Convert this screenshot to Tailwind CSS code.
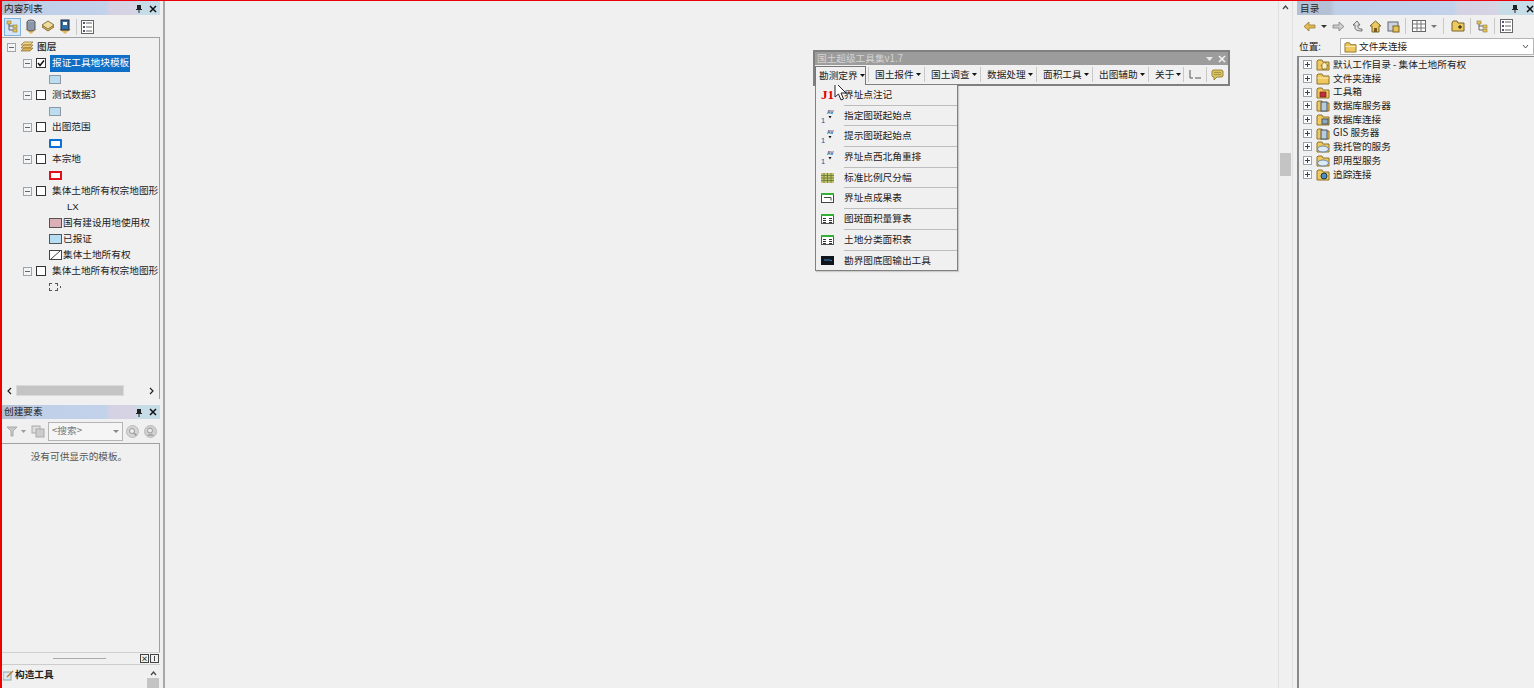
<!DOCTYPE html>
<html lang="zh-CN">
<head>
  <meta charset="UTF-8" />
  <title>ArcMap 国土超级工具集</title>
  <script src="https://cdn.jsdelivr.net/npm/@tailwindcss/browser@4"></script>
</head>
<body class="bg-[#f0f0f0] text-[#222] text-[9.67px] leading-none overflow-hidden font-['Noto_Sans_CJK_SC','Liberation_Sans',sans-serif]">
  <!-- icon sprites -->
  <svg class="hidden">
    <symbol id="minus" viewBox="0 0 9 9"><rect x=".5" y=".5" width="8" height="8" fill="#f4f4f4" stroke="#9aa5ad"/><path d="M2 4.5h5" stroke="#5a6a78"/></symbol>
    <symbol id="plus" viewBox="0 0 9 9"><rect x=".5" y=".5" width="8" height="8" fill="#fff" stroke="#9aa5ad"/><path d="M2 4.5h5M4.5 2v5" stroke="#33475b"/></symbol>
    <symbol id="folder" viewBox="0 0 14 13"><path d="M1 3V12H13V4H7L6 2H2Z" fill="#efc95f" stroke="#8f7228"/><path d="M1.5 6H12.5" stroke="#fbeeb8"/></symbol>
    <symbol id="avicon" viewBox="0 0 14 14"><text x="0" y="13.5" font-size="7.5" fill="#1f4f8f" font-family="Liberation Sans">1</text><text x="6" y="5" font-size="5" font-weight="700" fill="#1f4f8f" font-family="Liberation Sans">AV</text><path d="M7.5 7l1.500 2.500L10.500 7Z" fill="#111"/></symbol>
    <symbol id="tbl" viewBox="0 0 13 10"><rect x=".5" y=".5" width="12" height="9" fill="#fff" stroke="#555"/><path d="M0 1h13" stroke="#35b035" stroke-width="2"/><path d="M2 4.5h3M8 4.5h3M2 6.5h3M8 6.5h3M2 8.5h3M8 8.5h3" stroke="#333"/></symbol>
  </svg>

  <div class="flex h-[688px] w-[1534px] border-t border-l-[2px] border-t-[#e8000b] border-l-[#f00000]">
    <!-- left column -->
    <div class="w-[158px] shrink-0 flex flex-col">
      <div class="h-[14px] pt-px flex items-center pl-[2px] bg-[linear-gradient(90deg,#b4c0d4_0%,#b4c0d4_14%,#c0cfe8_16%,#c2d2ea_66%,#d4d2e2_68%,#d6d4e4_84%,#c6dce6_86%,#c6dce6_100%)]">
        <span class="flex-1">内容列表</span>
        <svg class="w-[8px] h-[9px] mr-[6px]" viewBox="0 0 8 9"><path d="M2 1h4v4h1v1H4.500v3h-1V6H1V5h1Z" fill="#222"/></svg>
        <svg class="w-[8px] h-[8px] mr-[3px]" viewBox="0 0 8 8"><path d="M1 1l6 6M7 1L1 7" stroke="#111" stroke-width="1.500"/></svg>
      </div>
      <div class="h-[22px] pt-px flex items-center gap-[3px] pl-[2px]">
        <span class="w-[17px] h-[18px] border border-[#7fb2dc] bg-[#d5e7f6] flex items-center justify-center">
          <svg class="w-[13px] h-[13px]" viewBox="0 0 13 13"><path d="M3 3v7h5M3 6h5" stroke="#666" fill="none"/><rect x="1" y="1" width="4" height="3" fill="#e8c45a" stroke="#7a6a2a" stroke-width=".5"/><rect x="7" y="5" width="4" height="3" fill="#e8c45a" stroke="#7a6a2a" stroke-width=".5"/><rect x="7" y="9" width="4" height="3" fill="#e8c45a" stroke="#7a6a2a" stroke-width=".5"/></svg>
        </span>
        <svg class="w-[14px] h-[16px]" viewBox="0 0 14 16"><path d="M1 10l6 5 6-5Z" fill="#e0b860"/><ellipse cx="7" cy="3" rx="4" ry="2" fill="#aab4c0" stroke="#556"/><path d="M3 3v7c0 2.500 8 2.500 8 0V3" fill="#8c98a8" stroke="#556"/></svg>
        <svg class="w-[14px] h-[16px]" viewBox="0 0 14 16"><path d="M7 4l6 4-6 4-6-4Z" fill="#d9b968" stroke="#8a7435"/><path d="M7 2l6 4-6 4-6-4Z" fill="#efdca0" stroke="#8a7435"/></svg>
        <svg class="w-[14px] h-[16px]" viewBox="0 0 14 16"><path d="M1 10l6 5 6-5Z" fill="#e0b860"/><rect x="3" y="1" width="8" height="10" fill="#2f6fa8" stroke="#223"/><rect x="5" y="3" width="4" height="3" fill="#fff"/></svg>
        <span class="w-px h-[16px] bg-[#c8c8c8] mx-[1px]"></span>
        <svg class="w-[13px] h-[14px]" viewBox="0 0 13 14"><rect x=".5" y=".5" width="12" height="13" fill="#fff" stroke="#666"/><path d="M5 3h6M5 7h6M5 11h6" stroke="#666"/><path d="M2 2h2v2H2zM2 6h2v2H2zM2 10h2v2H2z" fill="#557"/></svg>
      </div>

      <!-- layer tree -->
      <div class="h-[362px] shrink-0 border-t border-r border-[#a0a0a0] flex flex-col">
        <div class="flex-1 pl-[5px] pt-px">
          <div class="h-[16px] flex items-center font-medium">
            <svg class="w-[9px] h-[9px] shrink-0"><use href="#minus"/></svg>
            <svg class="w-[14px] h-[12px] ml-[4px] mr-[3px]" viewBox="0 0 14 12"><path d="M4 1h9l-3 3H1Z" fill="#f0d68a" stroke="#8a7030" stroke-width=".7"/><path d="M4 4h9l-3 3H1Z" fill="#e9c56c" stroke="#8a7030" stroke-width=".7"/><path d="M4 7h9l-3 3H1Z" fill="#ddb055" stroke="#8a7030" stroke-width=".7"/></svg>
            <span>图层</span>
          </div>
          <div class="pl-[16px]">
            <div class="h-[16px] flex items-center">
              <svg class="w-[9px] h-[9px] shrink-0"><use href="#minus"/></svg>
              <span class="w-[10px] h-[10px] shrink-0 ml-[4px] border border-[#333] bg-white flex items-center justify-center">
                <svg class="w-[8px] h-[8px]" viewBox="0 0 8 8"><path d="M1 4l2 2.500L7 1.500" stroke="#111" stroke-width="1.500" fill="none"/></svg>
              </span>
              <span class="ml-[4px] h-[17px] w-[80px] shrink-0 whitespace-nowrap bg-[#0f6fc6] text-white flex items-center pl-[2px]">报证工具地块模板</span>
            </div>
            <div class="h-[16px] flex items-center pl-[26px]"><span class="w-[12px] h-[9px] border border-[#8a9aa5] bg-[#bcdcf0]"></span></div>
            <div class="h-[16px] flex items-center">
              <svg class="w-[9px] h-[9px] shrink-0"><use href="#minus"/></svg>
              <span class="w-[10px] h-[10px] shrink-0 ml-[4px] border border-[#333] bg-white"></span>
              <span class="ml-[6px]">测试数据3</span>
            </div>
            <div class="h-[16px] flex items-center pl-[26px]"><span class="w-[12px] h-[9px] border border-[#8a9aa5] bg-[#bcdcf0]"></span></div>
            <div class="h-[16px] flex items-center">
              <svg class="w-[9px] h-[9px] shrink-0"><use href="#minus"/></svg>
              <span class="w-[10px] h-[10px] shrink-0 ml-[4px] border border-[#333] bg-white"></span>
              <span class="ml-[6px]">出图范围</span>
            </div>
            <div class="h-[16px] flex items-center pl-[26px]"><span class="w-[13px] h-[9px] border-[2px] border-[#0a6fd8] bg-white rounded-[1px]"></span></div>
            <div class="h-[16px] flex items-center">
              <svg class="w-[9px] h-[9px] shrink-0"><use href="#minus"/></svg>
              <span class="w-[10px] h-[10px] shrink-0 ml-[4px] border border-[#333] bg-white"></span>
              <span class="ml-[6px]">本宗地</span>
            </div>
            <div class="h-[16px] flex items-center pl-[26px]"><span class="w-[13px] h-[9px] border-[2px] border-[#e3101c] bg-white"></span></div>
            <div class="h-[16px] flex items-center whitespace-nowrap">
              <svg class="w-[9px] h-[9px] shrink-0"><use href="#minus"/></svg>
              <span class="w-[10px] h-[10px] shrink-0 ml-[4px] border border-[#333] bg-white"></span>
              <span class="ml-[6px]">集体土地所有权宗地图形</span>
            </div>
            <div class="h-[16px] flex items-center pl-[44px] font-['Liberation_Sans']">LX</div>
            <div class="h-[16px] flex items-center pl-[26px]"><span class="w-[13px] h-[10px] border border-[#555] bg-[#dcb0b6] mr-[1px]"></span>国有建设用地使用权</div>
            <div class="h-[16px] flex items-center pl-[26px]"><span class="w-[13px] h-[10px] border border-[#555] bg-[#b5def5] mr-[1px]"></span>已报证</div>
            <div class="h-[16px] flex items-center pl-[26px]">
              <svg class="w-[13px] h-[10px] mr-[1px]" viewBox="0 0 13 10"><rect x=".5" y=".5" width="12" height="9" fill="#fff" stroke="#444"/><path d="M2 9l9-8" stroke="#444"/></svg>集体土地所有权
            </div>
            <div class="h-[16px] flex items-center whitespace-nowrap">
              <svg class="w-[9px] h-[9px] shrink-0"><use href="#minus"/></svg>
              <span class="w-[10px] h-[10px] shrink-0 ml-[4px] border border-[#333] bg-white"></span>
              <span class="ml-[6px]">集体土地所有权宗地图形</span>
            </div>
            <div class="h-[16px] flex items-center pl-[26px]"><span class="w-[9px] h-[8px] border border-dashed border-[#555]"></span><span class="w-px h-[2px] bg-[#555] ml-[2px]"></span></div>
          </div>
        </div>
        <div class="h-[15px] flex items-center pl-[5px] pr-[5px] mb-px">
          <svg class="w-[5px] h-[8px] shrink-0" viewBox="0 0 5 8"><path d="M4 1L1 4l3 3" stroke="#222" stroke-width="1.200" fill="none"/></svg>
          <span class="w-[108px] h-[11px] shrink-0 ml-[4px] bg-[#c4c4c4] border border-[#dadada]"></span>
          <svg class="w-[5px] h-[8px] shrink-0 ml-auto" viewBox="0 0 5 8"><path d="M1 1l3 3-3 3" stroke="#222" stroke-width="1.200" fill="none"/></svg>
        </div>
      </div>

      <!-- create features panel -->
      <div class="mt-[6px] h-[14px] flex items-center pl-[2px] bg-[linear-gradient(90deg,#b4c0d4_0%,#b4c0d4_14%,#c0cfe8_16%,#c2d2ea_66%,#d4d2e2_68%,#d6d4e4_84%,#c6dce6_86%,#c6dce6_100%)]">
        <span class="flex-1">创建要素</span>
        <svg class="w-[8px] h-[9px] mr-[6px]" viewBox="0 0 8 9"><path d="M2 1h4v4h1v1H4.500v3h-1V6H1V5h1Z" fill="#222"/></svg>
        <svg class="w-[8px] h-[8px] mr-[3px]" viewBox="0 0 8 8"><path d="M1 1l6 6M7 1L1 7" stroke="#111" stroke-width="1.500"/></svg>
      </div>
      <div class="h-[24px] flex items-center pl-[4px]">
        <svg class="w-[13px] h-[13px]" viewBox="0 0 13 13"><path d="M1 2h10L7 6v5H5V6Z" fill="#c9c9c9" stroke="#aaa"/></svg>
        <svg class="w-[5px] h-[3px] ml-[2px]" viewBox="0 0 5 3"><path d="M0 0h5L2.500 3Z" fill="#999"/></svg>
        <svg class="w-[14px] h-[13px] ml-[5px]" viewBox="0 0 14 13"><rect x="1" y="1" width="8" height="7" fill="#ddd" stroke="#aaa"/><rect x="5" y="4" width="8" height="8" fill="#ccc" stroke="#aaa"/></svg>
        <div class="w-[75px] h-[19px] ml-[3px] border border-[#b5b5b5] bg-[#f5f5f5] text-[#777] flex items-center justify-between px-[3px]">
          &lt;搜索&gt;
          <svg class="w-[6px] h-[3px]" viewBox="0 0 6 3"><path d="M0 0h6L3 3Z" fill="#888"/></svg>
        </div>
        <svg class="w-[13px] h-[13px] ml-[3px]" viewBox="0 0 13 13"><circle cx="6.5" cy="6.5" r="6" fill="#d4d4d4" stroke="#bbb"/><circle cx="6" cy="6" r="2.5" fill="#eee" stroke="#999"/><path d="M8 8l2.500 2.500" stroke="#999" stroke-width="1.500"/></svg>
        <svg class="w-[13px] h-[13px] ml-[5px]" viewBox="0 0 13 13"><circle cx="6.5" cy="6.5" r="6" fill="#d0d0d0" stroke="#bbb"/><circle cx="6" cy="5.5" r="2.5" fill="#e8e8e8" stroke="#999"/><path d="M3 11c1-3 6-3 7 0" fill="#aaa"/></svg>
      </div>
      <div class="h-[209px] shrink-0 border-t border-r border-[#a0a0a0] text-center pt-[8px] text-[#555] pr-[3px]">没有可供显示的模板。</div>
      <div class="h-[12px] border-t border-[#d0d0d0] flex items-center relative">
        <span class="w-[53px] h-px bg-[#aaa] ml-[51px]"></span>
        <div class="absolute right-[1px] top-[1px] flex gap-px">
          <span class="w-[9px] h-[9px] border border-[#444] flex items-center justify-center text-[7px] font-bold">×</span>
          <span class="w-[9px] h-[9px] border border-[#444] flex items-center justify-center"><span class="w-px h-[5px] bg-[#444]"></span></span>
        </div>
      </div>
      <div class="h-[24px] border-t border-[#ccc] flex pt-[5px] pl-px relative">
        <svg class="w-[11px] h-[11px] mr-px" viewBox="0 0 11 11"><rect x="0" y="2" width="8" height="8" fill="#dfe6ee" stroke="#8aa"/><path d="M4 7l6-6" stroke="#c07a30" stroke-width="1.500"/></svg>
        <span class="font-bold">构造工具</span>
        <svg class="absolute right-[3px] top-[6px] w-[7px] h-[5px]" viewBox="0 0 7 5"><path d="M1 4l2.500-3L6 4" stroke="#444" fill="none" stroke-width="1.200"/></svg>
        <span class="absolute right-[1px] top-[13px] w-[12px] h-[10px] bg-[#c4c4c4]"></span>
      </div>
    </div>

    <!-- gap with splitter lines -->
    <div class="w-[5px] shrink-0 border-r-2 border-[#a8a8a8]"></div>

    <!-- map area -->
    <div class="w-[1113px] shrink-0"></div>

    <!-- vertical scrollbar -->
    <div class="w-[15px] shrink-0 border-x border-[#e0e0e0] flex flex-col items-center pt-[4px]">
      <svg class="w-[7px] h-[5px]" viewBox="0 0 7 5"><path d="M1 4l2.500-3L6 4" stroke="#444" fill="none" stroke-width="1.200"/></svg>
      <span class="w-[11px] h-[23px] mt-[143px] bg-[#c4c4c4]"></span>
    </div>
    <div class="w-[4px] shrink-0"></div>

    <!-- catalog panel -->
    <div class="flex-1 min-w-0 flex flex-col">
      <div class="h-[14px] pt-px flex items-center pl-[3px] bg-[linear-gradient(90deg,#b4c0d4_0%,#b4c0d4_14%,#c0cfe8_16%,#c2d2ea_66%,#d4d2e2_68%,#d6d4e4_84%,#c6dce6_86%,#c6dce6_100%)]">
        <span class="flex-1">目录</span>
        <svg class="w-[8px] h-[9px] mr-[7px]" viewBox="0 0 8 9"><path d="M2 1h4v4h1v1H4.500v3h-1V6H1V5h1Z" fill="#222"/></svg>
        <svg class="w-[8px] h-[8px]" viewBox="0 0 8 8"><path d="M1 1l6 6M7 1L1 7" stroke="#111" stroke-width="1.500"/></svg>
      </div>
      <div class="h-[22px] flex items-center pl-[6px]">
        <svg class="w-[13px] h-[11px]" viewBox="0 0 13 11"><path d="M1 5.5L6 1v3h6v3H6v3Z" fill="#e3bb4e" stroke="#8a7030" stroke-width=".7"/></svg>
        <svg class="w-[6px] h-[3px] ml-[5px]" viewBox="0 0 6 3"><path d="M0 0h6L3 3Z" fill="#333"/></svg>
        <svg class="w-[13px] h-[11px] ml-[5px]" viewBox="0 0 13 11"><path d="M12 5.5L7 1v3H1v3h6v3Z" fill="#ccc" stroke="#777" stroke-width=".7"/></svg>
        <svg class="w-[12px] h-[12px] ml-[6px]" viewBox="0 0 12 12"><path d="M6 1L2 5h2v3c0 2 3 3 7 3V9C8 9 7 8 7 7V5h2Z" fill="#e2e2e2" stroke="#555" stroke-width=".8"/></svg>
        <svg class="w-[13px] h-[13px] ml-[6px]" viewBox="0 0 13 13"><path d="M6.5 1L1 6h2v6h7V6h2Z" fill="#edca5e" stroke="#7a6228"/><rect x="5" y="8" width="3" height="4" fill="#7a5a20"/></svg>
        <svg class="w-[13px] h-[13px] ml-[5px]" viewBox="0 0 13 13"><rect x="1" y="2" width="10" height="9" fill="#c9d4de" stroke="#667"/><rect x="6" y="6" width="6" height="6" fill="#e8c252" stroke="#7a6228"/></svg>
        <span class="w-px h-[16px] bg-[#c8c8c8] ml-[5px]"></span>
        <svg class="w-[14px] h-[12px] ml-[6px]" viewBox="0 0 14 12"><rect x=".5" y=".5" width="13" height="11" fill="#fff" stroke="#666"/><path d="M0 4h14M0 8h14M5 0v12M9 0v12" stroke="#777"/></svg>
        <svg class="w-[6px] h-[3px] ml-[5px]" viewBox="0 0 6 3"><path d="M0 0h6L3 3Z" fill="#777"/></svg>
        <span class="w-px h-[16px] bg-[#c8c8c8] ml-[6px]"></span>
        <svg class="w-[14px] h-[12px] ml-[7px]" viewBox="0 0 14 12"><path d="M1 3V11H13V3H7L6 1H2Z" fill="#edca5e" stroke="#7a6228"/><path d="M7 7h4M9 5v4" stroke="#111"/></svg>
        <span class="w-px h-[16px] bg-[#c8c8c8] ml-[5px]"></span>
        <svg class="w-[13px] h-[13px] ml-[5px]" viewBox="0 0 13 13"><path d="M3 3v7h5M3 6h5" stroke="#666" fill="none"/><rect x="1" y="1" width="4" height="3" fill="#e8c45a" stroke="#7a6a2a" stroke-width=".5"/><rect x="7" y="5" width="4" height="3" fill="#e8c45a" stroke="#7a6a2a" stroke-width=".5"/><rect x="7" y="9" width="4" height="3" fill="#e8c45a" stroke="#7a6a2a" stroke-width=".5"/></svg>
        <span class="w-px h-[16px] bg-[#c8c8c8] ml-[5px]"></span>
        <svg class="w-[13px] h-[14px] ml-[5px]" viewBox="0 0 13 14"><rect x=".5" y=".5" width="12" height="13" fill="#fff" stroke="#666"/><path d="M5 3h6M5 7h6M5 11h6" stroke="#666"/><path d="M2 2h2v2H2zM2 6h2v2H2zM2 10h2v2H2z" fill="#557"/></svg>
      </div>
      <div class="h-[19px] flex items-center pl-[2px]">
        <span class="w-[41px] shrink-0">位置:</span>
        <div class="flex-1 h-[17px] border border-[#b5b5b5] bg-white flex items-center pl-[3px] pr-[4px]">
          <svg class="w-[13px] h-[12px] mr-[2px]"><use href="#folder"/></svg>
          <span class="flex-1">文件夹连接</span>
          <svg class="w-[7px] h-[5px]" viewBox="0 0 7 5"><path d="M1 1l2.500 3L6 1" stroke="#555" fill="none"/></svg>
        </div>
      </div>
      <div class="flex-1 border-t border-l-2 border-[#8a8a8a] pl-[4px] pt-px">
        <div class="h-[13.700px] flex items-center whitespace-nowrap"><svg class="w-[9px] h-[9px] mr-[4px]"><use href="#plus"/></svg><svg class="w-[14px] h-[13px] mr-[3px]" viewBox="0 0 14 13"><path d="M1 3V12H13V4H7L6 2H2Z" fill="#efc95f" stroke="#8f7228"/><path d="M8.500 4L5 7.500h1V11h5V7.500h1Z" fill="#fbeeb8" stroke="#6a5420" stroke-width=".7"/></svg>默认工作目录 - 集体土地所有权</div>
        <div class="h-[13.700px] flex items-center"><svg class="w-[9px] h-[9px] mr-[4px]"><use href="#plus"/></svg><svg class="w-[14px] h-[13px] mr-[3px]"><use href="#folder"/></svg>文件夹连接</div>
        <div class="h-[13.700px] flex items-center"><svg class="w-[9px] h-[9px] mr-[4px]"><use href="#plus"/></svg><svg class="w-[14px] h-[13px] mr-[3px]" viewBox="0 0 14 13"><path d="M1 3V12H13V4H7L6 2H2Z" fill="#efc95f" stroke="#8f7228"/><path d="M4 6h6v5H4Z" fill="#c0303a" stroke="#7a1a20" stroke-width=".7"/></svg>工具箱</div>
        <div class="h-[13.700px] flex items-center"><svg class="w-[9px] h-[9px] mr-[4px]"><use href="#plus"/></svg><svg class="w-[14px] h-[13px] mr-[3px]" viewBox="0 0 14 13"><path d="M1 3V12H13V4H7L6 2H2Z" fill="#efc95f" stroke="#8f7228"/><rect x="5" y="3" width="6" height="9" fill="#b8cbdc" stroke="#456"/></svg>数据库服务器</div>
        <div class="h-[13.700px] flex items-center"><svg class="w-[9px] h-[9px] mr-[4px]"><use href="#plus"/></svg><svg class="w-[14px] h-[13px] mr-[3px]" viewBox="0 0 14 13"><path d="M1 3V12H13V4H7L6 2H2Z" fill="#efc95f" stroke="#8f7228"/><rect x="6" y="6" width="6" height="5" fill="#8fa8c0" stroke="#456"/></svg>数据库连接</div>
        <div class="h-[13.700px] flex items-center"><svg class="w-[9px] h-[9px] mr-[4px]"><use href="#plus"/></svg><svg class="w-[14px] h-[13px] mr-[3px]" viewBox="0 0 14 13"><path d="M1 3V12H13V4H7L6 2H2Z" fill="#efc95f" stroke="#8f7228"/><rect x="5" y="3" width="6" height="9" fill="#b8cbdc" stroke="#456"/></svg>GIS 服务器</div>
        <div class="h-[13.700px] flex items-center"><svg class="w-[9px] h-[9px] mr-[4px]"><use href="#plus"/></svg><svg class="w-[14px] h-[13px] mr-[3px]" viewBox="0 0 14 13"><path d="M1 3V12H13V4H7L6 2H2Z" fill="#efc95f" stroke="#8f7228"/><ellipse cx="7" cy="9" rx="5.500" ry="3" fill="#dbeaf6" stroke="#6a8aa8"/></svg>我托管的服务</div>
        <div class="h-[13.700px] flex items-center"><svg class="w-[9px] h-[9px] mr-[4px]"><use href="#plus"/></svg><svg class="w-[14px] h-[13px] mr-[3px]" viewBox="0 0 14 13"><path d="M1 3V12H13V4H7L6 2H2Z" fill="#efc95f" stroke="#8f7228"/><ellipse cx="7" cy="9" rx="5.500" ry="3" fill="#dbeaf6" stroke="#6a8aa8"/></svg>即用型服务</div>
        <div class="h-[13.700px] flex items-center"><svg class="w-[9px] h-[9px] mr-[4px]"><use href="#plus"/></svg><svg class="w-[14px] h-[13px] mr-[3px]" viewBox="0 0 14 13"><path d="M1 3V12H13V4H7L6 2H2Z" fill="#efc95f" stroke="#8f7228"/><circle cx="8" cy="8" r="3" fill="#4a90c8" stroke="#234"/></svg>追踪连接</div>
      </div>
    </div>
  </div>

  <!-- floating toolbar -->
  <div class="absolute left-[813px] top-[50px] w-[417px] h-[36px] border-[2px] border-[#808080] bg-[#f0f0f0] whitespace-nowrap">
    <div class="h-[13px] bg-[#9c9c9c] text-[#d4d4d4] flex items-center pl-[2px] pr-[2px]">
      <span class="flex-1">国土超级工具集v1.7</span>
      <svg class="w-[7px] h-[4px] mr-[5px]" viewBox="0 0 7 4"><path d="M0 0h7L3.500 4Z" fill="#e8e8e8"/></svg>
      <svg class="w-[8px] h-[8px]" viewBox="0 0 8 8"><path d="M1 1l6 6M7 1L1 7" stroke="#f4f4f4" stroke-width="1.500"/></svg>
    </div>
    <div class="h-[19px] flex items-center">
      <div class="w-[51px] h-[19px] shrink-0 border border-b-0 border-[#777] flex items-center pl-[3px] bg-[#f0f0f0] z-10 mt-px">勘测定界<svg class="w-[5px] h-[3px] ml-[2px]" viewBox="0 0 5 3"><path d="M0 0h5L2.500 3Z" fill="#111"/></svg></div>
      <span class="w-px h-[15px] bg-[#c8c8c8] ml-[2px]"></span>
      <div class="w-[55px] flex items-center pl-[6px]">国土报件<svg class="w-[5px] h-[3px] ml-[2px]" viewBox="0 0 5 3"><path d="M0 0h5L2.500 3Z" fill="#111"/></svg></div>
      <span class="w-px h-[15px] bg-[#c8c8c8]"></span>
      <div class="w-[55px] flex items-center pl-[6px]">国土调查<svg class="w-[5px] h-[3px] ml-[2px]" viewBox="0 0 5 3"><path d="M0 0h5L2.500 3Z" fill="#111"/></svg></div>
      <span class="w-px h-[15px] bg-[#c8c8c8]"></span>
      <div class="w-[55px] flex items-center pl-[6px]">数据处理<svg class="w-[5px] h-[3px] ml-[2px]" viewBox="0 0 5 3"><path d="M0 0h5L2.500 3Z" fill="#111"/></svg></div>
      <span class="w-px h-[15px] bg-[#c8c8c8]"></span>
      <div class="w-[55px] flex items-center pl-[6px]">面积工具<svg class="w-[5px] h-[3px] ml-[2px]" viewBox="0 0 5 3"><path d="M0 0h5L2.500 3Z" fill="#111"/></svg></div>
      <span class="w-px h-[15px] bg-[#c8c8c8]"></span>
      <div class="w-[55px] flex items-center pl-[6px]">出图辅助<svg class="w-[5px] h-[3px] ml-[2px]" viewBox="0 0 5 3"><path d="M0 0h5L2.500 3Z" fill="#111"/></svg></div>
      <span class="w-px h-[15px] bg-[#c8c8c8]"></span>
      <div class="w-[34px] flex items-center pl-[6px]">关于<svg class="w-[5px] h-[3px] ml-[2px]" viewBox="0 0 5 3"><path d="M0 0h5L2.500 3Z" fill="#111"/></svg></div>
      <span class="w-px h-[15px] bg-[#c8c8c8]"></span>
      <svg class="w-[14px] h-[12px] ml-[4px]" viewBox="0 0 14 12"><path d="M2 1v8h3M7 9h6" stroke="#555" fill="none"/></svg>
      <span class="w-px h-[15px] bg-[#c8c8c8] ml-[4px]"></span>
      <svg class="w-[13px] h-[12px] ml-[4px]" viewBox="0 0 13 12"><path d="M2 1h9l1 1v5l-1 1H6L3 11V8H2L1 7V2Z" fill="#d9c060" stroke="#9a8a40"/><path d="M3 3.5h7M3 5.5h7" stroke="#8a7a30" stroke-width=".6"/></svg>
    </div>
  </div>

  <!-- dropdown menu -->
  <div class="absolute left-[815px] top-[84px] w-[143px] h-[187px] border border-[#808080] bg-[#f0f0f0] shadow-[1px_1px_1px_rgba(0,0,0,0.15)] whitespace-nowrap">
    <div class="h-[19.700px] flex items-center">
      <span class="w-[28px] pl-[5px] font-['Liberation_Serif'] font-bold text-[13px] text-[#e00000]">J1</span>
      <span>界址点注记</span>
    </div>
    <div class="h-[20.700px] flex items-center border-t border-[#bdbdbd] ml-[28px]">
      <svg class="w-[14px] h-[14px] -ml-[23px] mr-[9px]"><use href="#avicon"/></svg>
      <span>指定图斑起始点</span>
    </div>
    <div class="h-[20.700px] flex items-center border-t border-[#bdbdbd] ml-[28px]">
      <svg class="w-[14px] h-[14px] -ml-[23px] mr-[9px]"><use href="#avicon"/></svg>
      <span>提示图斑起始点</span>
    </div>
    <div class="h-[20.700px] flex items-center border-t border-[#bdbdbd] ml-[28px]">
      <svg class="w-[14px] h-[14px] -ml-[23px] mr-[9px]"><use href="#avicon"/></svg>
      <span>界址点西北角重排</span>
    </div>
    <div class="h-[20.700px] flex items-center border-t border-[#bdbdbd] ml-[28px]">
      <svg class="w-[13px] h-[10px] -ml-[23px] mr-[10px]" viewBox="0 0 13 10"><rect width="13" height="10" fill="#c8c070"/><path d="M0 2.5h13M0 5h13M0 7.5h13M3 0v10M6.5 0v10M10 0v10" stroke="#5a7a30" stroke-width=".8"/></svg>
      <span>标准比例尺分幅</span>
    </div>
    <div class="h-[20.700px] flex items-center border-t border-[#bdbdbd] ml-[28px]">
      <svg class="w-[13px] h-[10px] -ml-[23px] mr-[10px]" viewBox="0 0 13 10"><rect x=".5" y=".5" width="12" height="9" fill="#fff" stroke="#444"/><path d="M0 1h13" stroke="#35b035" stroke-width="2"/><path d="M3 4.5h7v3" stroke="#444" fill="none"/></svg>
      <span>界址点成果表</span>
    </div>
    <div class="h-[20.700px] flex items-center border-t border-[#bdbdbd] ml-[28px]">
      <svg class="w-[13px] h-[10px] -ml-[23px] mr-[10px]"><use href="#tbl"/></svg>
      <span>图斑面积量算表</span>
    </div>
    <div class="h-[20.700px] flex items-center border-t border-[#bdbdbd] ml-[28px]">
      <svg class="w-[13px] h-[10px] -ml-[23px] mr-[10px]"><use href="#tbl"/></svg>
      <span>土地分类面积表</span>
    </div>
    <div class="h-[20.700px] flex items-center border-t border-[#bdbdbd] ml-[28px]">
      <svg class="w-[13px] h-[9px] -ml-[23px] mr-[10px]" viewBox="0 0 13 9"><rect width="13" height="9" fill="#10151c"/><path d="M3 4h6l2 1" stroke="#3a8ac8"/></svg>
      <span>勘界图底图输出工具</span>
    </div>
  </div>

  <!-- mouse cursor -->
  <svg class="absolute left-[834px] top-[81px] w-[14px] h-[21px]" viewBox="0 0 14 21"><path d="M1 1V16L4.500 13 7 19 9.500 18 7 12H12Z" fill="#fff" stroke="#222"/></svg>
</body>
</html>
